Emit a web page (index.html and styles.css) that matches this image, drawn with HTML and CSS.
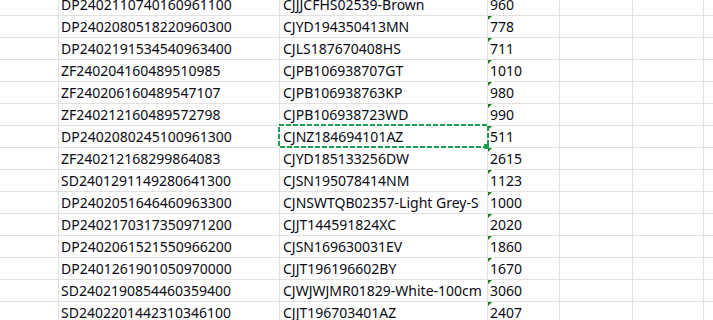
FILE: index.html
```html
<!DOCTYPE html>
<html>
<head>
<meta charset="utf-8">
<link rel="stylesheet" href="styles.css">
</head>
<body>
<div class="sheet">
  <div class="row"><div class="c a"></div><div class="c b">DP2402110740160961100</div><div class="c cc">CJJJCFHS02539-Brown</div><div class="c d num">960</div><div class="c e"></div><div class="c f"></div><div class="c g"></div></div>
  <div class="row"><div class="c a"></div><div class="c b">DP2402080518220960300</div><div class="c cc">CJYD194350413MN</div><div class="c d num">778</div><div class="c e"></div><div class="c f"></div><div class="c g"></div></div>
  <div class="row"><div class="c a"></div><div class="c b">DP2402191534540963400</div><div class="c cc">CJLS187670408HS</div><div class="c d num">711</div><div class="c e"></div><div class="c f"></div><div class="c g"></div></div>
  <div class="row"><div class="c a"></div><div class="c b">ZF240204160489510985</div><div class="c cc">CJPB106938707GT</div><div class="c d num">1010</div><div class="c e"></div><div class="c f"></div><div class="c g"></div></div>
  <div class="row"><div class="c a"></div><div class="c b">ZF240206160489547107</div><div class="c cc">CJPB106938763KP</div><div class="c d num">980</div><div class="c e"></div><div class="c f"></div><div class="c g"></div></div>
  <div class="row"><div class="c a"></div><div class="c b">ZF240212160489572798</div><div class="c cc">CJPB106938723WD</div><div class="c d num">990</div><div class="c e"></div><div class="c f"></div><div class="c g"></div></div>
  <div class="row"><div class="c a"></div><div class="c b">DP2402080245100961300</div><div class="c cc sel">CJNZ184694101AZ<svg class="marquee" width="212" height="25" viewBox="0 0 212 25"><rect x="1" y="1" width="209" height="22" fill="none" stroke="#1f9d55" stroke-width="2" stroke-dasharray="5 2"/><rect x="206" y="20" width="5" height="5" fill="#1f9d55"/></svg></div><div class="c d num">511</div><div class="c e"></div><div class="c f"></div><div class="c g"></div></div>
  <div class="row"><div class="c a"></div><div class="c b">ZF240212168299864083</div><div class="c cc">CJYD185133256DW</div><div class="c d num">2615</div><div class="c e"></div><div class="c f"></div><div class="c g"></div></div>
  <div class="row"><div class="c a"></div><div class="c b">SD2401291149280641300</div><div class="c cc">CJSN195078414NM</div><div class="c d num">1123</div><div class="c e"></div><div class="c f"></div><div class="c g"></div></div>
  <div class="row"><div class="c a"></div><div class="c b">DP2402051646460963300</div><div class="c cc">CJNSWTQB02357-Light Grey-S</div><div class="c d num">1000</div><div class="c e"></div><div class="c f"></div><div class="c g"></div></div>
  <div class="row"><div class="c a"></div><div class="c b">DP2402170317350971200</div><div class="c cc">CJJT144591824XC</div><div class="c d num">2020</div><div class="c e"></div><div class="c f"></div><div class="c g"></div></div>
  <div class="row"><div class="c a"></div><div class="c b">DP2402061521550966200</div><div class="c cc">CJSN169630031EV</div><div class="c d num">1860</div><div class="c e"></div><div class="c f"></div><div class="c g"></div></div>
  <div class="row"><div class="c a"></div><div class="c b">DP2401261901050970000</div><div class="c cc">CJJT196196602BY</div><div class="c d num">1670</div><div class="c e"></div><div class="c f"></div><div class="c g"></div></div>
  <div class="row"><div class="c a"></div><div class="c b">SD2402190854460359400</div><div class="c cc">CJWJWJMR01829-White-100cm</div><div class="c d num">3060</div><div class="c e"></div><div class="c f"></div><div class="c g"></div></div>
  <div class="row"><div class="c a"></div><div class="c b">SD2402201442310346100</div><div class="c cc">CJJT196703401AZ</div><div class="c d num">2407</div><div class="c e"></div><div class="c f"></div><div class="c g"></div></div>
</div>
</body>
</html>
```
FILE: styles.css
```css
html, body {
  margin: 0;
  padding: 0;
  background: #fff;
  overflow: hidden;
}
.sheet {
  margin-top: -6px;
  font-family: "Noto Sans", "DejaVu Sans", sans-serif;
  font-size: 14px;
  color: #0a0a14;
}
.row {
  display: flex;
  height: 22px;
}
.c {
  box-sizing: border-box;
  height: 22px;
  border-right: 1px solid #e1e1e1;
  border-bottom: 1px solid #e1e1e1;
  white-space: nowrap;
  overflow: visible;
  display: flex;
  align-items: center;
  line-height: 21px;
  position: relative;
}
.a { width: 59px; }
.b { width: 221px; padding-left: 2px; }
.cc { width: 208px; padding-left: 3px; }
.d { width: 72px; padding-left: 2px; }
.e { width: 73px; }
.f { width: 71px; }
.g { flex: 1; border-right: none; }
.num::before {
  content: "";
  position: absolute;
  left: 0;
  top: 0;
  width: 0;
  height: 0;
  border-top: 4px solid #1a7a1a;
  border-right: 4px solid transparent;
}
.marquee {
  position: absolute;
  left: -2px;
  top: -2px;
  z-index: 2;
}
```
